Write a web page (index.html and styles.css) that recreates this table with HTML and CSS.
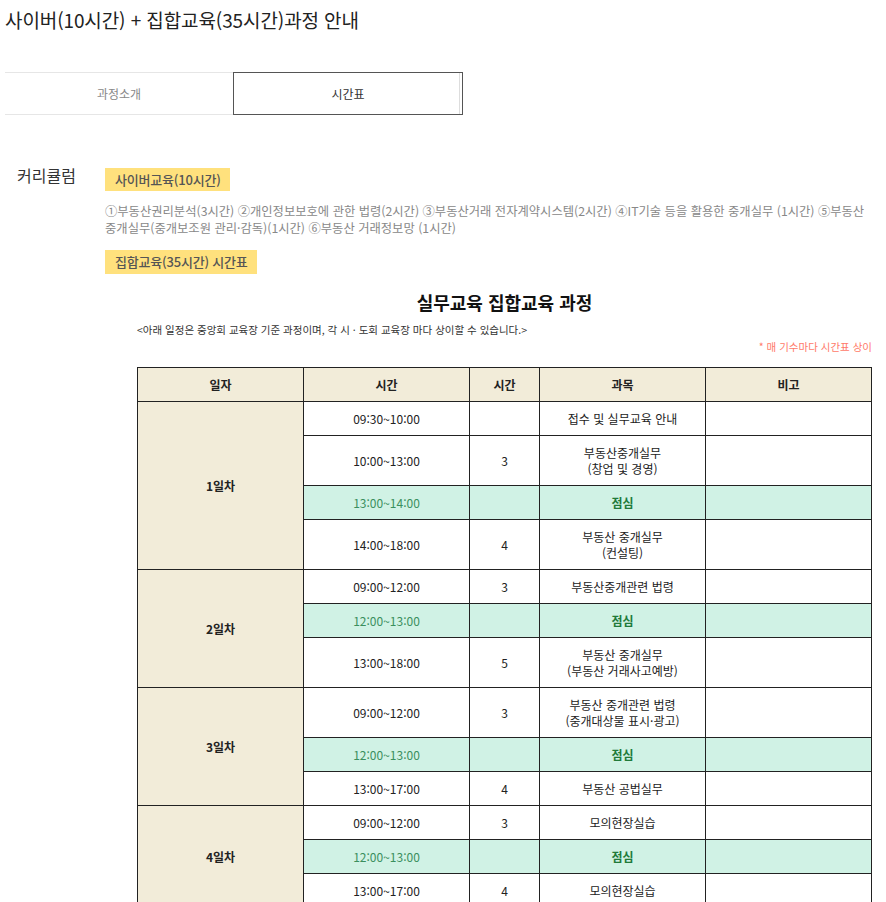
FILE: index.html
```html
<!DOCTYPE html>
<html lang="ko">
<head>
<meta charset="utf-8">
<title>과정 안내</title>
<link rel="stylesheet" href="styles.css">
</head>
<body>
<div class="page">
  <h1 class="title">사이버(10시간) + 집합교육(35시간)과정 안내</h1>

  <div class="tabs">
    <div class="tab">과정소개</div>
    <div class="tab tab-active">시간표</div>
  </div>

  <div class="curri">
    <div class="curri-label">커리큘럼</div>
    <div class="curri-body">
      <div class="badge">사이버교육(10시간)</div>
      <p class="desc">①부동산권리분석(3시간) ②개인정보보호에 관한 법령(2시간) ③부동산거래 전자계약시스템(2시간) ④IT기술 등을 활용한 중개실무 (1시간) ⑤부동산 중개실무(중개보조원 관리·감독)(1시간) ⑥부동산 거래정보망 (1시간)</p>
      <div class="badge badge-2">집합교육(35시간) 시간표</div>

      <div class="schedule">
        <h2 class="sched-title">실무교육 집합교육 과정</h2>
        <p class="sched-note">&lt;아래 일정은 중앙회 교육장 기준 과정이며, 각 시 · 도회 교육장 마다 상이할 수 있습니다.&gt;</p>
        <p class="sched-warn">* 매 기수마다 시간표 상이</p>
        <table class="tt">
          <colgroup>
            <col class="c-day"><col class="c-time"><col class="c-hour"><col class="c-subj"><col class="c-note">
          </colgroup>
          <thead>
            <tr><th>일자</th><th>시간</th><th>시간</th><th>과목</th><th>비고</th></tr>
          </thead>
          <tbody>
            <tr><td class="day" rowspan="4">1일차</td><td>09:30~10:00</td><td></td><td>접수 및 실무교육 안내</td><td></td></tr>
            <tr><td>10:00~13:00</td><td>3</td><td>부동산중개실무<br>(창업 및 경영)</td><td></td></tr>
            <tr class="lunch"><td>13:00~14:00</td><td></td><td class="lunch-label">점심</td><td></td></tr>
            <tr><td>14:00~18:00</td><td>4</td><td>부동산 중개실무<br>(컨설팅)</td><td></td></tr>

            <tr><td class="day" rowspan="3">2일차</td><td>09:00~12:00</td><td>3</td><td>부동산중개관련 법령</td><td></td></tr>
            <tr class="lunch"><td>12:00~13:00</td><td></td><td class="lunch-label">점심</td><td></td></tr>
            <tr><td>13:00~18:00</td><td>5</td><td>부동산 중개실무<br>(부동산 거래사고예방)</td><td></td></tr>

            <tr><td class="day" rowspan="3">3일차</td><td>09:00~12:00</td><td>3</td><td>부동산 중개관련 법령<br>(중개대상물 표시·광고)</td><td></td></tr>
            <tr class="lunch"><td>12:00~13:00</td><td></td><td class="lunch-label">점심</td><td></td></tr>
            <tr><td>13:00~17:00</td><td>4</td><td>부동산 공법실무</td><td></td></tr>

            <tr><td class="day" rowspan="3">4일차</td><td>09:00~12:00</td><td>3</td><td>모의현장실습</td><td></td></tr>
            <tr class="lunch"><td>12:00~13:00</td><td></td><td class="lunch-label">점심</td><td></td></tr>
            <tr><td>13:00~17:00</td><td>4</td><td>모의현장실습</td><td></td></tr>
          </tbody>
        </table>
      </div>
    </div>
  </div>
</div>
</body>
</html>
```

FILE: styles.css
```css
* { box-sizing: border-box; }

html, body {
  margin: 0;
  padding: 0;
  background: #fff;
}

body {
  font-family: "Noto Sans CJK KR", "Noto Sans", sans-serif;
  color: #222;
}

.page {
  padding: 0 14px 20px 5px;
}

.title {
  margin: 0;
  padding-top: 7px;
  font-size: 19px;
  line-height: 26px;
  font-weight: 400;
  color: #222;
  letter-spacing: -0.1px;
}

.tabs {
  display: flex;
  width: 458px;
  margin-top: 39px;
}

.tab {
  flex: 1;
  height: 43px;
  display: flex;
  align-items: center;
  justify-content: center;
  font-size: 12px;
  color: #888;
  border-top: 1px solid #e6e6e6;
  border-bottom: 1px solid #e6e6e6;
}

.tab-active {
  border: 1px solid #555;
  color: #333;
  box-shadow: inset -2px 0 0 #fff, inset -3px 0 0 #ddd;
}

.curri {
  display: flex;
  margin-top: 53px;
  padding-left: 12px;
}

.curri-label {
  width: 88px;
  flex: none;
  font-size: 16px;
  line-height: 18px;
  margin-top: -2px;
  color: #333;
}

.curri-body {
  flex: 1;
  min-width: 0;
}

.badge {
  width: max-content;
  background: #ffe17d;
  color: #555;
  font-size: 13px;
  font-weight: 500;
  line-height: 23px;
  padding: 0 9px 0 10px;
  letter-spacing: -0.2px;
}

.badge-2 {
  line-height: 24px;
}

.desc {
  margin: 12px 0 13px;
  font-size: 12.3px;
  line-height: 17px;
  color: #888;
}

.schedule {
  margin-left: 32px;
}

.sched-title {
  margin: 14px 0 0;
  text-align: center;
  font-size: 18px;
  line-height: 28px;
  font-weight: 700;
  color: #111;
}

.sched-note {
  margin: 6px 0 0;
  font-size: 10.5px;
  line-height: 16px;
  color: #333;
}

.sched-warn {
  margin: 1px 0 12px;
  text-align: right;
  font-size: 10.5px;
  line-height: 16px;
  color: #ff7a6a;
}

.tt {
  width: 100%;
  border-collapse: collapse;
  table-layout: fixed;
  font-size: 12px;
}

.c-day { width: 166px; }
.c-time { width: 166px; }
.c-hour { width: 70px; }
.c-subj { width: 166px; }
.c-note { width: auto; }

.tt th,
.tt td {
  border: 1px solid #222;
  padding: 8.5px 4px;
  line-height: 16px;
  text-align: center;
  vertical-align: middle;
  color: #222;
}

.tt th {
  background: #f2ecd9;
  font-weight: 700;
}

.tt td.day {
  background: #f2ecd9;
  font-weight: 700;
}

.tt tr.lunch td {
  background: #d0f2e5;
  color: #3a8f5e;
}

.tt tr.lunch td.lunch-label {
  color: #217a3a;
  font-weight: 700;
}
```
